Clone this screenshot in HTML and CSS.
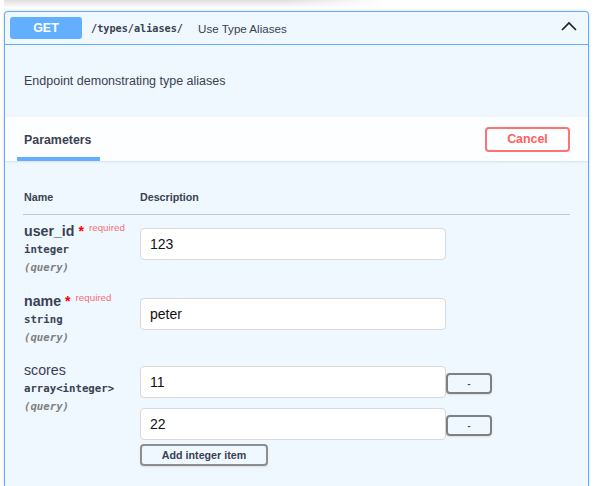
FILE: index.html
```html
<!DOCTYPE html>
<html>
<head>
<meta charset="utf-8">
<link rel="stylesheet" href="styles.css">
</head>
<body>
<div class="page">
  <div class="shade"></div>
  <div class="opblock">
    <div class="summary">
      <span class="method">GET</span>
      <span class="path">/types/aliases/</span>
      <span class="sdesc">Use Type Aliases</span>
      <svg class="arrow" width="16" height="10" viewBox="0 0 16 10"><polyline points="1,9 8,2 15,9" fill="none" stroke="#1d1d1d" stroke-width="1.6"/></svg>
    </div>
    <div class="desc">Endpoint demonstrating type aliases</div>
    <div class="sec-head">
      <div class="tab">Parameters</div>
      <button class="cancel">Cancel</button>
    </div>
    <div class="params">
      <div class="thead">
        <div class="col-name">Name</div>
        <div class="col-desc">Description</div>
      </div>
      <div class="prow row1">
        <div class="col-name">
          <div class="pname required">user_id&nbsp;<span class="star">*</span><span class="reqlabel">required</span></div>
          <div class="ptype">integer</div>
          <div class="pin">(query)</div>
        </div>
        <div class="col-desc">
          <input class="field" type="text" value="123">
        </div>
      </div>
      <div class="prow row2">
        <div class="col-name">
          <div class="pname required">name&nbsp;<span class="star">*</span><span class="reqlabel">required</span></div>
          <div class="ptype">string</div>
          <div class="pin">(query)</div>
        </div>
        <div class="col-desc">
          <input class="field" type="text" value="peter">
        </div>
      </div>
      <div class="prow row3">
        <div class="col-name">
          <div class="pname">scores</div>
          <div class="ptype">array&lt;integer&gt;</div>
          <div class="pin">(query)</div>
        </div>
        <div class="col-desc items">
          <div class="item">
            <input class="field" type="text" value="11">
            <button class="minus">-</button>
          </div>
          <div class="item">
            <input class="field" type="text" value="22">
            <button class="minus">-</button>
          </div>
          <button class="add">Add integer item</button>
        </div>
      </div>
    </div>
  </div>
</div>
</body>
</html>
```
FILE: styles.css
```css
* { box-sizing: border-box; }
html, body { margin: 0; padding: 0; background: #fff; }
body {
  font-family: "Liberation Sans", Arial, sans-serif;
  color: #3b4151;
  overflow: hidden;
}
.page {
  padding: 0 14px 0 4px;
  width: 603px;
  height: 486px;
  overflow: hidden;
}
.shade {
  width: 380px;
  height: 8px;
  background: linear-gradient(to bottom, rgba(0,0,0,0.12), rgba(0,0,0,0));
  -webkit-mask-image: linear-gradient(to right, #000 75%, transparent 100%);
  mask-image: linear-gradient(to right, #000 75%, transparent 100%);
}
.opblock {
  margin-top: 3px;
  width: 585px;
  height: 475px;
  border: 1px solid #61affe;
  border-bottom: none;
  border-radius: 4px 4px 0 0;
  background: rgba(97,175,254,0.1);
  box-shadow: 0 0 3px rgba(0,0,0,0.19);
}
.summary {
  display: flex;
  align-items: center;
  padding: 5px;
  border-bottom: 1px solid #61affe;
}
.method {
  width: 72px;
  height: 22px;
  display: flex;
  align-items: center;
  justify-content: center;
  background: #61affe;
  border-radius: 3px;
  color: #fff;
  font-weight: bold;
  font-size: 12.5px;
}
.path {
  margin-left: 9px;
  font-family: "DejaVu Sans Mono", monospace;
  font-weight: bold;
  font-size: 10.2px;
  color: #3b4151;
}
.sdesc {
  margin-left: 15px;
  font-size: 11.6px;
  color: #3b4151;
}
.arrow {
  margin-left: auto;
  margin-right: 6px;
  margin-bottom: 4px;
}
.desc {
  padding: 28px 19px 28px;
  font-size: 12.5px;
  line-height: 16px;
}
.sec-head {
  height: 44px;
  display: flex;
  align-items: stretch;
  padding: 0 18px 0 12px;
  background: rgba(255,255,255,0.8);
  box-shadow: 0 1px 2px rgba(0,0,0,0.1);
}
.tab {
  display: flex;
  align-items: center;
  padding: 5px 8px 0 7px;
  border-bottom: 4px solid #61affe;
  font-weight: bold;
  font-size: 12.4px;
}
.cancel {
  margin-left: auto;
  align-self: center;
  width: 85px;
  height: 25px;
  border: 2px solid #ff7272;
  border-radius: 4px;
  background: transparent;
  color: #ff6060;
  font-family: "Liberation Sans", Arial, sans-serif;
  font-weight: bold;
  font-size: 12.4px;
  padding: 0;
}
.params {
  padding: 0 18px;
}
.thead {
  display: flex;
  padding-top: 29px;
  padding-bottom: 10px;
  border-bottom: 1px solid rgba(59,65,81,0.25);
  font-weight: bold;
  font-size: 10.7px;
  line-height: 14px;
}
.col-name {
  width: 117px;
  padding-left: 1px;
  flex: none;
}
.col-desc {
  flex: 1;
}
.prow {
  display: flex;
}
.row1 { height: 70px; }
.row2 { height: 69px; }
.prow .col-name { padding-top: 7px; }
.prow .col-desc { padding-top: 13px; }
.row3 .col-desc { padding-top: 12px; }
.pname {
  font-size: 14.2px;
  line-height: 18px;
}
.pname.required { font-weight: bold; }
.star { color: #ff0000; }
.reqlabel {
  font-weight: normal;
  font-size: 9.8px;
  line-height: 1;
  color: rgba(255,0,0,0.6);
  padding-left: 5px;
  vertical-align: 5px;
}
.ptype {
  margin-top: 1px;
  font-family: "DejaVu Sans Mono", monospace;
  font-weight: bold;
  font-size: 10.7px;
  line-height: 18px;
}
.pin {
  font-family: "DejaVu Sans Mono", monospace;
  font-weight: bold;
  font-style: italic;
  font-size: 10.7px;
  line-height: 18px;
  color: #808080;
}
.field {
  display: block;
  width: 306px;
  height: 32px;
  margin: 0;
  padding: 0 9px;
  border: 1px solid #d9d9d9;
  border-radius: 4px;
  background: #fff;
  font-family: "Liberation Sans", Arial, sans-serif;
  font-size: 14px;
  color: #111;
  outline: none;
}
.items {
  display: flex;
  flex-direction: column;
  align-items: flex-start;
}
.item {
  display: flex;
  align-items: center;
  margin-bottom: 10px;
}
.item:nth-child(2) { margin-bottom: 4px; }
.minus {
  width: 46px;
  height: 21px;
  margin-top: 3px;
  padding: 0;
  border: 2px solid #808080;
  border-radius: 4px;
  background: transparent;
  box-shadow: 0 1px 2px rgba(0,0,0,0.1);
  font-family: "Liberation Sans", Arial, sans-serif;
  font-weight: bold;
  font-size: 9px;
  color: #3b4151;
}
.add {
  width: 128px;
  height: 22px;
  padding: 0;
  border: 2px solid #8e8e8e;
  border-radius: 4px;
  background: transparent;
  box-shadow: 0 1px 2px rgba(0,0,0,0.1);
  font-family: "Liberation Sans", Arial, sans-serif;
  font-weight: bold;
  font-size: 10.7px;
  color: #3b4151;
}
```
